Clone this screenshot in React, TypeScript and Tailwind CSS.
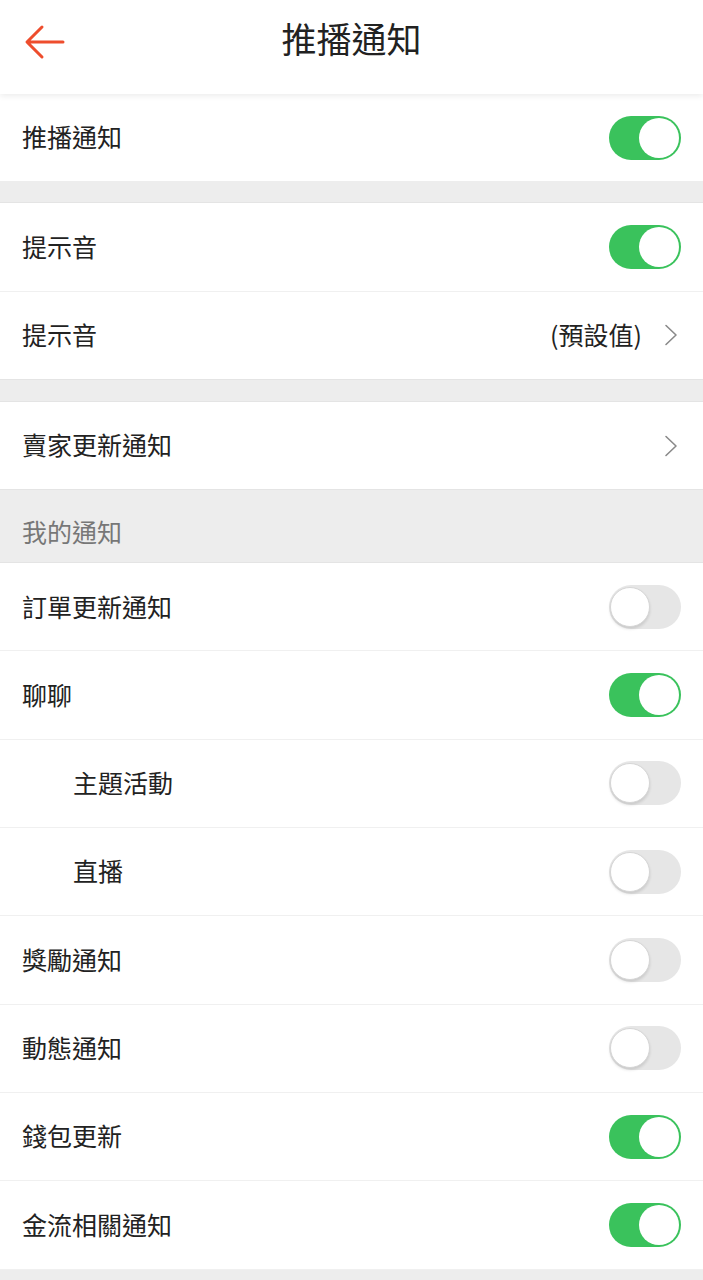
import React from "react";

const font = { fontFamily: '"Noto Sans CJK TC", "Noto Sans", sans-serif' };

function Toggle({ on }: { on: boolean }) {
  return (
    <div
      className={`relative h-[44px] w-[72px] rounded-full ${
        on ? "bg-[#3ac25c]" : "bg-[#e6e6e6]"
      }`}
    >
      <div
        className={`absolute top-[2px] h-[40px] w-[40px] rounded-full bg-white ${
          on ? "right-[2px]" : "left-[1px] border border-[#d6d6d6] shadow-[0_2px_3px_rgba(0,0,0,0.12)]"
        }`}
      />
    </div>
  );
}

function Chevron() {
  return (
    <svg className="mr-[3px]" width="14" height="22" viewBox="0 0 14 22" fill="none">
      <path d="M2 1.5 L12 11 L2 20.5" stroke="#8a8a8a" strokeWidth="1.6" strokeLinecap="round" strokeLinejoin="round" />
    </svg>
  );
}

function Row({
  label,
  indent,
  right,
  divider = true,
}: {
  label: string;
  indent?: boolean;
  right: React.ReactNode;
  divider?: boolean;
}) {
  return (
    <div className={`bg-white ${divider ? "border-b border-[#f0f0f0]" : ""}`}>
      <div className="flex h-[87.3px] items-center justify-between pr-[22px]">
        <span className={`-mt-[1px] text-[25px] text-[#222] ${indent ? "pl-[73px]" : "pl-[22px]"}`}>{label}</span>
        {right}
      </div>
    </div>
  );
}

export default function App() {
  const mine = [
    { label: "訂單更新通知", on: false },
    { label: "聊聊", on: true },
    { label: "主題活動", on: false, indent: true },
    { label: "直播", on: false, indent: true },
    { label: "獎勵通知", on: false },
    { label: "動態通知", on: false },
    { label: "錢包更新", on: true },
    { label: "金流相關通知", on: true },
  ];

  return (
    <div className="min-h-[1280px] bg-[#ededed]" style={font}>
      <header className="relative z-10 flex h-[94px] items-center justify-center bg-white shadow-[0_2px_6px_rgba(0,0,0,0.08)]">
        <svg className="absolute left-[24px] top-[24px]" width="42" height="36" viewBox="0 0 42 36" fill="none">
          <path d="M39 18 H4 M18 3 L3 18 L18 33" stroke="#ee4d2d" strokeWidth="3" strokeLinecap="round" strokeLinejoin="round" />
        </svg>
        <h1 className="-mt-[18px] text-[35px] text-[#222]">推播通知</h1>
      </header>

      <Row label="推播通知" right={<Toggle on />} divider={false} />

      <div className="h-[22px] border-b border-[#e4e4e4]" />

      <Row label="提示音" right={<Toggle on />} />
      <Row
        label="提示音"
        divider={false}
        right={
          <div className="flex items-center gap-[22px]">
            <span className="-mt-[1px] text-[25px] text-[#222]">(預設值)</span>
            <Chevron />
          </div>
        }
      />

      <div className="h-[23px] border-y border-[#e4e4e4]" />

      <Row label="賣家更新通知" divider={false} right={<Chevron />} />

      <div className="flex h-[74px] items-start border-y border-[#e4e4e4] pl-[22px] pt-[23px] text-[25px] text-[#777]">
        我的通知
      </div>

      {mine.map((m) => (
        <Row key={m.label} label={m.label} indent={m.indent} right={<Toggle on={m.on} />} />
      ))}
    </div>
  );
}
